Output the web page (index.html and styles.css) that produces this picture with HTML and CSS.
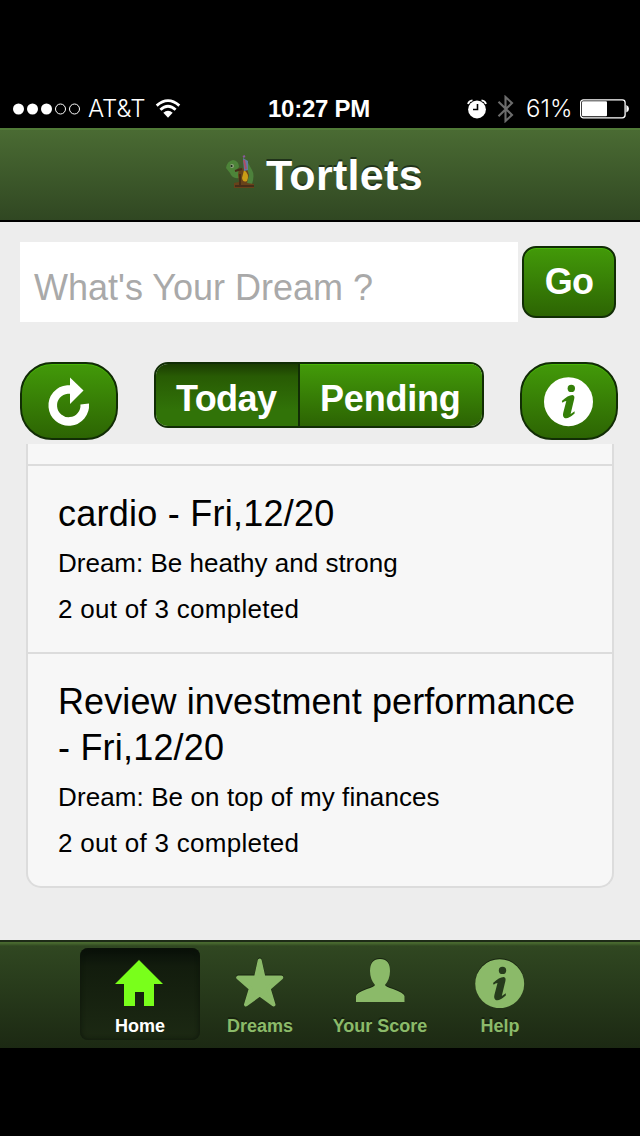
FILE: index.html
```html
<!DOCTYPE html>
<html lang="en">
<head>
<meta charset="utf-8">
<title>Tortlets</title>
<link rel="stylesheet" href="styles.css">
</head>
<body>
<div class="status">
  <svg class="signal" width="70" height="14" viewBox="0 0 70 14"><g fill="#fff"><circle cx="6.5" cy="7" r="5.5"/><circle cx="20.5" cy="7" r="5.5"/><circle cx="34.5" cy="7" r="5.5"/></g><g fill="none" stroke="#fff"><circle cx="48.5" cy="7" r="5"/><circle cx="62.5" cy="7" r="5"/></g></svg>
  <span class="carrier">AT&amp;T</span>
  <svg class="wifi" width="26" height="20" viewBox="0 0 26 20"><g fill="none" stroke="#fff" stroke-width="2.8"><path d="M1.7 6.6Q13-3.3 24.3 6.6"/><path d="M5.4 10.8Q13 3.8 20.6 10.8"/></g><path fill="#fff" d="M8.3 13.8Q13 9.8 17.7 13.8L13 18.8Z"/></svg>
  <span class="clock">10:27 PM</span>
  <svg class="alarm" width="20" height="20" viewBox="0 0 20 20"><circle cx="10" cy="10.5" r="8.9" fill="#fff"/><path d="M1 5Q2 1.7 5.5 1.4M19 5Q18 1.7 14.5 1.4" fill="none" stroke="#fff" stroke-width="1.8"/><path d="M10.5 5V10.5H6" fill="none" stroke="#000" stroke-width="1.6"/></svg>
  <svg class="bluetooth" width="18" height="28" viewBox="0 0 18 28"><path d="M1.5 6.8L15 20L8.5 26V2L15 8L1.5 21.2" fill="none" stroke="#6c6c6c" stroke-width="2.1"/></svg>
  <span class="percent">61%</span>
  <svg class="battery" width="50" height="20" viewBox="0 0 50 20"><rect x=".6" y=".8" width="44.5" height="18" rx="2.8" fill="none" stroke="#fff" stroke-width="1.3"/><rect x="2" y="2.3" width="25" height="15" rx="1" fill="#fff"/><path d="M46.3 6Q49 7 49 9.7T46.3 13.6Z" fill="#fff"/></svg>
</div>
<header class="navbar">
  <svg class="turtle" width="32" height="36" viewBox="0 0 32 36"><path d="M1 13Q2 6 8 5Q14 6 14 12L11 15L17 16L14 23Q7 24 5 18Z" fill="#4d8439"/><path d="M22 6L27 15Q30 20 27 29L22 29L19 17Z" fill="#4d813c"/><path d="M14 13L22 14L24 20L22 28L29 29V33H9V28L14 27L13 20Z" fill="#68421a"/><path d="M19 15Q25 19 22 26Q18 28 17 23Z" fill="#cb9d15"/><path d="M18 3L23 6V15L19 16Z" fill="#627aa0"/><path d="M19 5L21 14" stroke="#b04b62" stroke-width="1.8"/><path d="M18 2L20 1" stroke="#8d599b" stroke-width="2"/><circle cx="7" cy="11" r="2" fill="#90a37c"/><circle cx="6.5" cy="11" r="1.1" fill="#172719"/><path d="M10 16L17 14M10 31H29M15 19V30" stroke="#472d18" stroke-width="2"/></svg>
  <h1 class="title">Tortlets</h1>
</header>
<main class="content">
  <div class="search"><div class="field">What's Your Dream ?</div><div class="btn go">Go</div></div>
  <div class="tools">
    <div class="btn round"><svg width="94" height="74" viewBox="0 0 94 74"><path d="M48 25.5H45.5A16 16 0 1 0 62.7 40" fill="none" stroke="#fff" stroke-width="8.6"/><path d="M48 13.5L61.5 26.5L48 40Z" fill="#fff"/></svg></div>
    <div class="segments"><div class="seg active">Today</div><div class="seg pending">Pending</div></div>
    <div class="btn round"><svg width="94" height="74" viewBox="0 0 94 74"><circle cx="46.5" cy="37.7" r="24.5" fill="#fff"/><g fill="#347f08"><circle cx="49.3" cy="24.4" r="3.7"/><path d="M39.8 37Q46 31 50.5 31Q53 31.5 52.2 35L48.6 50L52.6 47.2V49.6Q46 55.5 42.5 54Q40.3 52.5 41.3 48.5L44.3 37Q42 37 40.5 38.8Z"/></g></svg></div>
  </div>
  <div class="list">
    <div class="stub"></div>
    <div class="item"><div class="line l1">cardio - Fri,12/20</div><div class="line"><small class="s1">Dream: Be heathy and strong</small></div><div class="line"><small class="s2">2 out of 3 completed</small></div></div>
    <div class="item"><div class="line l2">Review investment performance</div><div class="line l3">- Fri,12/20</div><div class="line"><small class="s3">Dream: Be on top of my finances</small></div><div class="line"><small class="s2">2 out of 3 completed</small></div></div>
  </div>
</main>
<nav class="tabs">
  <div class="tab on"><svg width="60" height="60" viewBox="0 0 60 60"><path d="M29 12L53 36H44V58H34V44H25V58H14V36H5Z" fill="#79ff1b"/></svg><span>Home</span></div>
  <div class="tab"><svg width="60" height="60" viewBox="0 0 60 60"><path d="M29.7 12.5L33.5 29.5H51.3L38.7 40.5L43.5 56.5L29.7 46.5L16 56.5L20.8 40.5L8.2 29.5H26Z" fill="#8bba69" stroke="#8bba69" stroke-width="4" stroke-linejoin="round"/></svg><span>Dreams</span></div>
  <div class="tab"><svg width="60" height="60" viewBox="0 0 60 60"><path d="M30 11Q40 11 40 23Q40 31 35 37Q36 39 43 41Q54 45 54.5 48V54H6V48Q6 45 17 41Q24 39 25 37Q20 31 20 23Q20 11 30 11Z" fill="#8bba69"/></svg><span>Your Score</span></div>
  <div class="tab"><svg width="60" height="60" viewBox="0 0 60 60"><circle cx="29.7" cy="35.7" r="24.5" fill="#8bba69"/><g fill="#263b1c"><circle cx="32.5" cy="22.4" r="3.7"/><path d="M23 35Q29.2 29 33.7 29Q36.2 29.5 35.4 33L31.8 48L35.8 45.2V47.6Q29.2 53.5 25.7 52Q23.5 50.5 24.5 46.5L27.5 35Q25.2 35 23.7 36.8Z"/></g></svg><span>Help</span></div>
</nav>
</body>
</html>
```
FILE: styles.css
```css
* { box-sizing: border-box; }
body { margin: 0; width: 640px; height: 1136px; background: #000; color: #000; font-family: "Liberation Sans", Arial, sans-serif; overflow: hidden; display: flex; flex-direction: column; white-space: nowrap; }
svg { display: block; flex: none; }
.status { flex: none; height: 128px; padding: 89px 0 0 12px; display: flex; align-items: center; color: #fff; font: 300 24px/40px Inter, "Liberation Sans", sans-serif; }
.carrier { width: 62px; margin-left: 6px; letter-spacing: 0; }
.wifi { margin-left: 5px; }
.clock { margin-left: 87px; width: 104px; font: 700 24px/40px "Liberation Sans", sans-serif; letter-spacing: -.25px; }
.alarm { margin-left: 95px; }
.bluetooth { margin-left: 10px; }
.percent { margin-left: 11px; width: 50px; letter-spacing: 0; }
.battery { margin-left: 4px; }
.navbar { flex: none; height: 94px; padding-left: 225px; display: flex; align-items: flex-start; border-top: 2px solid #507a37; border-bottom: 2px solid #000; background: linear-gradient(#4a6b33, #304722); }
.turtle { margin-top: 25px; filter: blur(.7px); }
.title { margin: 20px 0 0 9px; font: 700 43px/50px "Liberation Sans", sans-serif; letter-spacing: .3px; color: #fff; text-shadow: 0 -2px 0 #20321a; }
.content { flex: none; height: 718px; padding: 20px; background: #ededed; }
.search { display: flex; gap: 4px; height: 80px; }
.field { width: 498px; background: #fff; color: #a9a9a9; font-size: 36px; line-height: 92px; padding-left: 14px; }
.btn { border: 2px solid #112d05; background: linear-gradient(#439b09, #2c6303); background-origin: border-box; box-shadow: inset 0 1px 0 #48b507; color: #fff; }
.go { margin-top: 4px; width: 94px; height: 72px; border-radius: 14px; font-weight: bold; font-size: 36px; line-height: 68px; letter-spacing: -.8px; text-align: center; }
.tools { margin-top: 40px; height: 78px; display: flex; justify-content: space-between; width: 598px; }
.round { width: 98px; height: 78px; border-radius: 32px; }
.segments { display: flex; width: 330px; height: 66px; border: 2px solid #112d05; border-radius: 14px; overflow: hidden; color: #fff; font-weight: bold; font-size: 36px; line-height: 69px; }
.seg { background: linear-gradient(#439b09, #2c6303); box-shadow: inset 0 1px 0 #48b507; }
.seg.active { width: 144px; padding-left: 20px; border-right: 2px solid #112d05; letter-spacing: -.6px; background: linear-gradient(#1b3d02, #285b04 20%, #317308 75%, #317308); box-shadow: none; }
.pending { flex: 1; padding-left: 20px; letter-spacing: -.2px; }
.list { margin: 4px 0 0 6px; width: 588px; height: 444px; background: #f7f7f7; border: 2px solid #dcdcdc; border-top: 0; border-radius: 0 0 15px 15px; }
.stub { height: 20px; }
.item { border-top: 2px solid #dcdcdc; padding: 25px 0 23px 30px; }
.line { height: 46px; font-size: 36px; line-height: 46px; }
.line small { font-size: 26px; }
.l1 { letter-spacing: .25px; }
.l2 { letter-spacing: .1px; }
.l3 { letter-spacing: .2px; }
.s2 { letter-spacing: .28px; }
.s3 { letter-spacing: .1px; }
.tabs { flex: none; height: 108px; padding: 8px 80px 0; display: flex; border-top: 2px solid #1d2b16; background: linear-gradient(#48692f 0, #48692f 1px, #304721 4px, #1c2913); }
.tab { width: 120px; height: 92px; margin-top: -2px; display: flex; flex-direction: column; align-items: center; color: #8bba69; font-size: 18px; font-weight: bold; line-height: 24px; text-shadow: 0 -2px 0 #17230f; }
.tab svg { filter: drop-shadow(0 -1px 0 #17230f); }
.tab span { margin-top: 6px; }
.tab.on { background: linear-gradient(#080f08, #121c0d 20%, #1c2913); border-radius: 8px; box-shadow: inset 0 0 5px #0c140a; color: #fff; }
```
